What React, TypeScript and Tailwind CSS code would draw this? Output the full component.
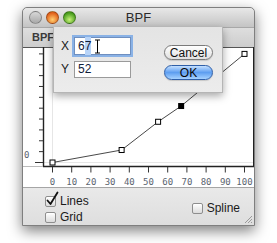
import React from 'react'

// BPF editor window with the point-edit sheet open
const X0 = 29.5
const Y0 = 115.5
const SX = 1.92
const SY = 1.086

const points: [number, number][] = [
  [0, 0],
  [36, 11.5],
  [55, 37.5],
  [67, 52],
  [100, 100],
]

const px = (v: number) => X0 + SX * v
const py = (v: number) => Y0 - SY * v

function Chart() {
  const line = points.map(([x, y]) => `${px(x)},${py(y)}`).join(' ')
  return (
    <svg width="231" height="141" className="block" style={{ fontFamily: '"DejaVu Sans Mono", monospace' }}>
      <rect x="0" y="0" width="231" height="141" fill="#ffffff" />
      {/* origin guides */}
      <line x1={X0} y1="1" x2={X0} y2="119" stroke="#e6e6e6" />
      <line x1="21" y1={Y0} x2="230" y2={Y0} stroke="#e6e6e6" />
      {/* frame */}
      <line x1="0" y1="0.5" x2="231" y2="0.5" stroke="#555" />
      <line x1="20.5" y1="0" x2="20.5" y2="120" stroke="#222" strokeWidth="1.4" />
      <line x1="230.5" y1="0" x2="230.5" y2="120" stroke="#222" />
      <line x1="0" y1="119.5" x2="20" y2="119.5" stroke="#bbb" />
      <line x1="20" y1="119.5" x2="231" y2="119.5" stroke="#222" strokeWidth="1.4" />
      {/* y ruler */}
      {Array.from({ length: 11 }).map((_, k) => (
        <line key={k} x1={k === 0 ? 12 : 16} y1={Y0 - 10.86 * k} x2="20" y2={Y0 - 10.86 * k} stroke="#333" />
      ))}
      <text x="1" y="111" fontSize="9" fill="#5a6470">0</text>
      {/* x ruler */}
      {Array.from({ length: 11 }).map((_, k) => (
        <g key={k}>
          <line x1={X0 + 19.2 * k} y1="120" x2={X0 + 19.2 * k} y2="125.5" stroke="#333" />
          <text x={X0 + 19.2 * k} y="137.5" fontSize="9" fill="#5a6470" textAnchor="middle">
            {k * 10}
          </text>
        </g>
      ))}
      {/* bpf */}
      <polyline points={line} fill="none" stroke="#333" strokeWidth="0.9" />
      {points.map(([x, y], i) =>
        i === 3 ? (
          <rect key={i} x={px(x) - 3} y={py(y) - 3} width="6" height="6" fill="#000" />
        ) : (
          <rect key={i} x={px(x) - 2.5} y={py(y) - 2.5} width="5" height="5" fill="#fff" stroke="#000" />
        )
      )}
    </svg>
  )
}

function Check({ checked, label }: { checked?: boolean; label: string }) {
  return (
    <div className="flex items-center gap-[4px] h-[16px]">
      <div className="relative w-[11px] h-[11px] rounded-[2px] border border-[#8e8e8e] bg-gradient-to-b from-[#ffffff] to-[#dcdcdc] shadow-[inset_0_1px_0_#fff]">
        {checked && (
          <svg width="14" height="16" className="absolute left-[0px] top-[-6px]" viewBox="0 0 14 16">
            <path d="M1.5 9.5 L4.5 13 L11.5 1.5" fill="none" stroke="#111" strokeWidth="1.8" strokeLinecap="round" strokeLinejoin="round" />
          </svg>
        )}
      </div>
      <span className="text-[12px] leading-none text-[#1a1a1a]">{label}</span>
    </div>
  )
}

function Light({ color }: { color: string }) {
  return <div className={`w-[13px] h-[13px] rounded-full border border-black/30 ${color}`} />
}

export default function App() {
  return (
    <div
      className="w-[277px] h-[243px] bg-white pt-[7px] pl-[22px] overflow-hidden"
      style={{ fontFamily: '"Liberation Sans", Arial, sans-serif' }}
    >
      <div className="relative w-[233px] h-[219px] flex flex-col border border-[#7f7f7f] rounded-t-[5px] bg-[#e6e6e6] shadow-[0_5px_14px_rgba(0,0,0,0.5)]">
        {/* title bar */}
        <div className="relative h-[19px] flex items-center rounded-t-[5px] bg-gradient-to-b from-[#e8e8e8] to-[#c4c4c4]">
          <div className="flex items-center gap-[4px] pl-[6px]">
            <Light color="bg-gradient-to-b from-[#d8d8d8] to-[#a9a9a9]" />
            <Light color="bg-[radial-gradient(circle_at_50%_70%,#ffd070,#e2621b_70%)]" />
            <Light color="bg-[radial-gradient(circle_at_50%_70%,#c8f27a,#4a9e1d_70%)]" />
          </div>
          <div className="absolute inset-0 flex items-center justify-center text-[13px] text-[#2a2a2a]">BPF</div>
        </div>
        {/* header strip */}
        <div className="h-[20px] flex items-center pl-[9px] bg-gradient-to-b from-[#dedede] to-[#cdcdcd] border-t border-[#a8a8a8]">
          <span className="text-[11px] font-bold text-[#3a3a3a]">BPF</span>
        </div>
        <Chart />
        {/* options */}
        <div className="relative flex-1 flex justify-between border-t border-[#a5a5a5] bg-gradient-to-b from-[#e9e9e9] to-[#dedede]">
          <div className="flex flex-col pl-[22px] pt-[5px]">
            <Check checked label="Lines" />
            <Check label="Grid" />
          </div>
          <div className="pr-[14px] pt-[12px]">
            <Check label="Spline" />
          </div>
          <svg width="9" height="9" className="absolute right-[1px] bottom-[1px]">
            <path d="M1 8 L8 1 M4 8 L8 4 M7 8 L8 7" stroke="#9a9a9a" strokeWidth="1" />
          </svg>
        </div>

        {/* edit sheet */}
        <div className="absolute left-[30px] top-[19px] w-[170px] h-[66px] bg-gradient-to-b from-[#e4e4e4] to-[#ececec] border border-t-0 border-[#b5b5b5] shadow-[0_3px_8px_rgba(0,0,0,0.35)] flex">
          <div className="flex flex-col gap-[5px] pl-[7px] pt-[10px]">
            <div className="flex items-center gap-[5px]">
              <span className="w-[8px] text-[12px] text-[#1a1a1a]">X</span>
              <div className="relative w-[57px] h-[18px] bg-white border border-[#6f8fbf] shadow-[0_0_0_2px_#8ab2e6] flex items-center pl-[3px] text-[12px] text-[#10203a]">
                <span>6</span>
                <span className="bg-[#b8d4f8]">7</span>
                <svg width="7" height="15" className="absolute left-[19px] top-[1px]" viewBox="0 0 7 15">
                  <path d="M1 1 H6 M3.5 1 V14 M1 14 H6" stroke="#fff" strokeWidth="2.4" fill="none" />
                  <path d="M1 1 H6 M3.5 1 V14 M1 14 H6" stroke="#000" strokeWidth="1" fill="none" />
                </svg>
              </div>
            </div>
            <div className="flex items-center gap-[5px]">
              <span className="w-[8px] text-[12px] text-[#1a1a1a]">Y</span>
              <div className="w-[57px] h-[17px] bg-white border border-[#9a9a9a] flex items-center pl-[3px] text-[12px] text-[#10203a]">
                52
              </div>
            </div>
          </div>
          <div className="flex flex-col gap-[5px] pl-[33px] pt-[18px]">
            <div className="w-[49px] h-[15px] rounded-full border border-[#7a7a7a] bg-gradient-to-b from-[#ffffff] to-[#e0e0e0] shadow-[0_1px_1px_rgba(0,0,0,0.15)] flex items-center justify-center text-[12px] text-[#111]">
              Cancel
            </div>
            <div className="w-[49px] h-[15px] rounded-full border border-[#2f5fa8] bg-gradient-to-b from-[#c4e0ff] via-[#5e9ef0] to-[#a6d2ff] shadow-[0_1px_1px_rgba(0,0,0,0.15)] flex items-center justify-center text-[12px] text-[#0a0a0a]">
              OK
            </div>
          </div>
        </div>
      </div>
    </div>
  )
}
